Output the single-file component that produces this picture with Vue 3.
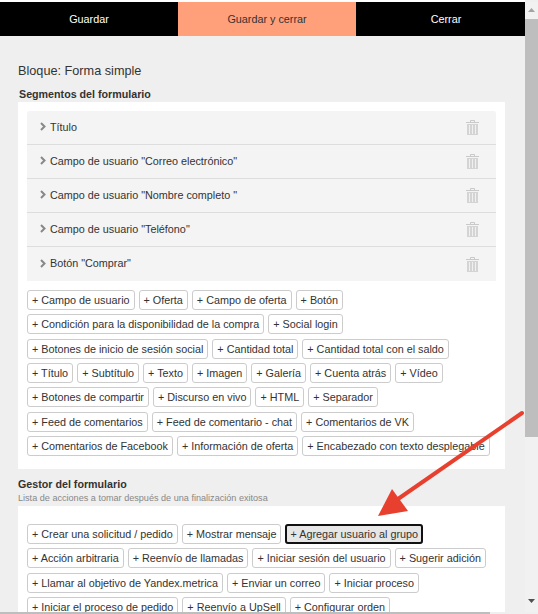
<template>
  <div class="page">
    <div class="viewport">
      <div class="toolbar">
        <button class="tool">Guardar</button>
        <button class="tool active">Guardar y cerrar</button>
        <button class="tool">Cerrar</button>
      </div>

      <h1 class="block-title">Bloque: Forma simple</h1>

      <h2 class="section-title">Segmentos del formulario</h2>
      <div class="panel">
        <div class="segments">
          <div v-for="segment in segments" :key="segment" class="segment">
            <svg class="chevron" width="6" height="9" viewBox="0 0 6 9">
              <path d="M1 1l3.500 3.500L1 8" fill="none" stroke="#888" stroke-width="2" />
            </svg>
            <span class="segment-name">{{ segment }}</span>
            <svg class="trash" width="13" height="15" viewBox="0 0 13 15">
              <path d="M0 2.500h13M4.500 2.500V.5h4v2" fill="none" stroke="#c9c9c9" />
              <rect x="1" y="4" width="11" height="11" fill="#d4d4d4" />
              <path d="M3.500 5v9M6.500 5v9M9.500 5v9" stroke="#f0f0f0" />
            </svg>
          </div>
        </div>
        <div class="chips">
          <button v-for="item in segmentButtons" :key="item" class="chip">+ {{ item }}</button>
        </div>
      </div>

      <h2 class="section-title manager">Gestor del formulario</h2>
      <p class="hint">Lista de acciones a tomar después de una finalización exitosa</p>
      <div class="panel actions">
        <div class="chips">
          <button
            v-for="item in actionButtons"
            :key="item"
            :class="['chip', { focused: item === 'Agregar usuario al grupo' }]"
          >+ {{ item }}</button>
        </div>
      </div>
    </div>

    <div class="scroll-y">
      <svg class="scroll-arrow" width="13" height="13" viewBox="0 0 13 13"><path d="M3 8l3.500-4L10 8z" fill="#a3a3a3" /></svg>
      <div class="scroll-thumb"></div>
      <svg class="scroll-arrow bottom" width="13" height="13" viewBox="0 0 13 13"><path d="M3 5l3.500 4L10 5z" fill="#505050" /></svg>
    </div>
    <div class="scroll-x"></div>

    <svg class="annotation" width="538" height="614" viewBox="0 0 538 614">
      <path d="M522 413L398 499" stroke="#e8402f" stroke-width="4" stroke-linecap="round" fill="none" />
      <path d="M378 516L392 489L408 511z" fill="#e8402f" />
    </svg>
  </div>
</template>

<script setup>
const segments = [
  'Título',
  'Campo de usuario "Correo electrónico"',
  'Campo de usuario "Nombre completo "',
  'Campo de usuario "Teléfono"',
  'Botón "Comprar"'
];

const segmentButtons = [
  'Campo de usuario',
  'Oferta',
  'Campo de oferta',
  'Botón',
  'Condición para la disponibilidad de la compra',
  'Social login',
  'Botones de inicio de sesión social',
  'Cantidad total',
  'Cantidad total con el saldo',
  'Título',
  'Subtítulo',
  'Texto',
  'Imagen',
  'Galería',
  'Cuenta atrás',
  'Vídeo',
  'Botones de compartir',
  'Discurso en vivo',
  'HTML',
  'Separador',
  'Feed de comentarios',
  'Feed de comentario - chat',
  'Comentarios de VK',
  'Comentarios de Facebook',
  'Información de oferta',
  'Encabezado con texto desplegable'
];

const actionButtons = [
  'Crear una solicitud / pedido',
  'Mostrar mensaje',
  'Agregar usuario al grupo',
  'Acción arbitraria',
  'Reenvío de llamadas',
  'Iniciar sesión del usuario',
  'Sugerir adición',
  'Llamar al objetivo de Yandex.metrica',
  'Enviar un correo',
  'Iniciar proceso',
  'Iniciar el proceso de pedido',
  'Reenvío a UpSell',
  'Configurar orden'
];
</script>

<style scoped>
.page {
  position: relative;
  width: 538px;
  height: 614px;
  overflow: hidden;
  background: #efefef;
  font-family: "Liberation Sans", Arial, sans-serif;
  color: #333;
}

.viewport {
  width: 525px;
  height: 612px;
  overflow: hidden;
  padding-top: 2px;
  box-sizing: border-box;
  background: linear-gradient(#fff 2px, #efefef 2px);
}

.toolbar {
  display: flex;
  height: 34px;
  background: #000;
}

.tool {
  width: 178px;
  padding: 0;
  border: 0;
  background: #000;
  color: #fff;
  font: 10.800px "Liberation Sans", Arial, sans-serif;
}

.tool.active {
  background: #ffa07a;
  color: #333;
}

.tool:last-child {
  width: 169px;
  padding-left: 11px;
}

.block-title {
  margin: 27px 0 0 18px;
  font-size: 12.700px;
  line-height: 16px;
  font-weight: normal;
}

.section-title {
  margin: 8px 0 0 19px;
  font-size: 10.700px;
  line-height: 14px;
  font-weight: bold;
}

.section-title.manager {
  margin: 8px 0 0 18px;
}

.hint {
  margin: 1px 0 0 18px;
  font-size: 9.100px;
  line-height: 13px;
  color: #888;
}

.panel {
  width: 487px;
  height: 367px;
  margin: 1px 0 0 18px;
  padding: 9px 9px 0;
  box-sizing: border-box;
  background: #fff;
}

.panel.actions {
  height: 130px;
  padding-top: 18px;
}

.segments {
  margin-bottom: 9px;
}

.segment {
  display: flex;
  align-items: center;
  box-sizing: border-box;
  height: 34px;
  padding: 0 17px 0 13px;
  background: #f4f4f4;
  border-bottom: 1px solid #ddd;
}

.segment:first-child {
  border-radius: 3px 3px 0 0;
}

.segment:last-child {
  border-bottom: 0;
}

.chevron {
  flex: none;
  margin: 0 4px 2px 0;
}

.segment-name {
  flex: 1;
  margin-bottom: 2px;
  font-size: 10.800px;
}

.trash {
  flex: none;
}

.chips {
  display: flex;
  flex-wrap: wrap;
  gap: 4.330px 4px;
}

.chip {
  height: 20px;
  padding: 0 4px;
  border: 1px solid #ccc;
  border-radius: 3px;
  background: #fff;
  color: #333;
  font: 10.800px/18px "Liberation Sans", Arial, sans-serif;
  white-space: nowrap;
}

.chip.focused {
  background: #e6e6e6;
  outline: 2px solid #111;
  outline-offset: -2px;
}

.scroll-y {
  position: absolute;
  top: 2px;
  right: 0;
  width: 13px;
  height: 610px;
  background: #f1f1f1;
}

.scroll-arrow {
  position: absolute;
  top: 2px;
  left: 0;
}

.scroll-arrow.bottom {
  top: auto;
  bottom: 5px;
}

.scroll-thumb {
  position: absolute;
  top: 17px;
  left: 0;
  width: 13px;
  height: 418px;
  background: #bebebe;
}

.scroll-x {
  position: absolute;
  left: 0;
  bottom: 0;
  width: 490px;
  height: 2px;
  background: #bebebe;
}

.annotation {
  position: absolute;
  top: 0;
  left: 0;
  pointer-events: none;
}
</style>
